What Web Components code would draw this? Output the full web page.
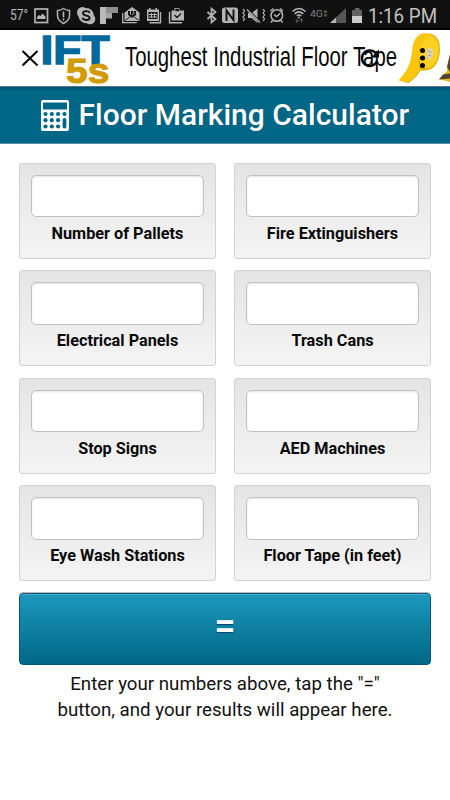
<!DOCTYPE html>
<html lang="en"><head><meta charset="utf-8"><title>Floor Marking Calculator</title>
<style>html,body{margin:0;background:#fff;width:450px;height:800px;overflow:hidden;font-family:Roboto,"Liberation Sans",sans-serif}</style></head>
<body><calculator-app></calculator-app>
<script>
const define=(name,html,init)=>customElements.define(name,class extends HTMLElement{
 constructor(){super();this.attachShadow({mode:'open'}).innerHTML=html;}
 connectedCallback(){if(init)init(this,this.shadowRoot);}
});

define('status-icon','<style>:host{display:block;height:30px;flex:none}svg{display:block;overflow:visible}</style><svg height="30"></svg>',(el,r)=>{
 const [x,w]=el.getAttribute('box').split(' ').map(Number);
 const s=r.querySelector('svg');
 s.setAttribute('width',w);s.setAttribute('viewBox',`${x} 0 ${w} 30`);
 s.innerHTML=icons[el.getAttribute('name')];
});

const C='#b4b4b4',line=`fill="none" stroke="${C}"`;
const icons={
 temp:`<text x="10" y="20" font-size="14" fill="${C}" textLength="18" lengthAdjust="spacingAndGlyphs">57°</text>`,
 image:`<rect x="35" y="9" width="12.5" height="13.5" ${line} stroke-width="1.7"/><path d="M37 19v-2l2-2 1.500 1 2-2.500 3 3v2.500z" fill="${C}"/>`,
 shield:`<path d="M63.500 8.500c2 1.500 4 2 6 2v5c0 4-3 6.500-6 8-3-1.500-6-4-6-8v-5c2 0 4-.5 6-2z" ${line} stroke-width="1.500"/><path d="M63.500 11.500v6M63.500 18.500v2" stroke="${C}" stroke-width="1.600"/>`,
 skype:`<circle cx="82.500" cy="12.500" r="5.500" fill="${C}"/><circle cx="90" cy="19" r="5.300" fill="${C}"/><circle cx="86.200" cy="15.700" r="7.600" fill="${C}"/><path d="M89.800 12.800c-1-2.200-6.800-2.300-6.800.5 0 3.200 6.600 1.500 6.600 4.600 0 2.800-5.800 2.800-7.200 0" fill="none" stroke="#111" stroke-width="1.900"/>`,
 flip:`<path d="M100 7h18v6h-6v5.500h-6V24h-6z" fill="#a5a5a5"/><path d="M100 7h6v17h-6z" fill="#b9b9b9"/><path d="M106 7h12v6h-12z" fill="#8f8f8f"/>`,
 mail:`<path d="M124.500 12.500l7.500-5.500 7.500 5.500v8.500h-15z" fill="${C}"/><path d="M128 11h8v4l-4 3-4-3z" fill="#151515"/><path d="M130.500 10.500v4M133 11.500c1.500 0 1.500 3-1 3" ${line}/><path d="M125 20.500l5.500-4h3l5.500 4" fill="none" stroke="#222"/><path d="M122.700 13v9.700h14" ${line} stroke-width="1.300"/>`,
 cal:`<path d="M147 9.500h2v-1.500h1.500v1.500h5v-1.500h1.500v1.500h2v11.500h-12z" fill="${C}"/><path d="M148.500 12h9v7h-9z" fill="#151515"/><path d="M149 14.500h8M149 17h8M151.500 13v5M154.500 13v5" stroke="${C}"/><path d="M160.500 12v10.700h-11" ${line} stroke-width="1.400"/>`,
 bag:`<path d="M171.500 10.500h3v-2.500h5v2.500h4.500v10h-12.500z" fill="${C}"/><path d="M176 9.500h2.500v1H176zM174.500 15l2.500 2.500 4-4" stroke="#181818" stroke-width="1.300" fill="none"/><path d="M169.500 12v10.700h12.500" ${line} stroke-width="1.400"/>`,
 bt:`<path d="M207.500 12l8 7-4 3.500v-14l4 3.500-8 7" ${line} stroke-width="1.700"/>`,
 nfc:`<rect x="222" y="7.500" width="16" height="15.500" rx="2.500" fill="${C}"/><path d="M226.500 21V10.500l7 9.500V9.500" fill="none" stroke="#111" stroke-width="1.900"/>`,
 mute:`<path d="M248 13h3.500l6-4.500V23l-6-5H248z" fill="${C}"/><path d="M246.500 8l14 15" stroke="#111" stroke-width="2.400"/><path d="M247 9.500l13 13" stroke="${C}" stroke-width="1.300"/><path d="M243 9l1.500 2-1.500 2 1.500 2-1.500 2 1.500 2-1.500 2M263 9l1.500 2-1.500 2 1.500 2-1.500 2 1.500 2-1.500 2" ${line} stroke-width="1.200"/>`,
 alarm:`<circle cx="276.800" cy="15.500" r="5.800" ${line} stroke-width="1.500"/><path d="M274 14.500l2.500 2 3.500-3M270.500 11l3-2.500M280 8.500l3 2.500M272.500 20.500l-1.500 2M281 20.500l1.500 2" ${line} stroke-width="1.500"/>`,
 wifi:`<path d="M292.500 11.500q6.500-6 13 0M294.700 13.800q4.300-3.800 8.600 0M296.800 16q2.300-2 4.600 0" ${line} stroke-width="1.600"/><circle cx="299" cy="17.500" r="1" fill="${C}"/><path d="M297 18.500v3.500M295.500 20.500l1.500 1.800 1.500-1.800M301.500 22.500v-3.500M300 20.500l1.500-1.800 1.500 1.800" fill="none" stroke="#666"/>`,
 lte:`<text x="310" y="16.500" font-size="8.500" fill="#808080" textLength="13" lengthAdjust="spacingAndGlyphs">4G</text><path d="M324 10.500h3v2.500h-3z" fill="#555"/><path d="M324 14h3v2.500h-3z" fill="#505050"/>`,
 signal:`<path d="M330 23L346 8v15z" fill="#555"/><path d="M330 23L336 17.500V23z" fill="${C}"/>`,
 battery:`<path d="M352 10h3V8h4.500v2h2.500v13h-10z" fill="#626262"/><path d="M352 16h10v7h-10z" fill="#cbcbcb"/>`,
 time:`<text x="368" y="22.800" font-size="19.500" fill="#c2c2c2" textLength="69" lengthAdjust="spacingAndGlyphs">1:16 PM</text>`
};
const slots=[['temp',0,32],['image',32,20],['shield',52,23],['skype',75,22],['flip',97,23],['mail',120,23],['cal',143,22],['bag',165,38],['bt',203,17],['nfc',220,20],['mute',240,27],['alarm',267,21],['wifi',288,20],['lte',308,20],['signal',328,20],['battery',348,17],['time',365,85]];
define('status-bar','<style>:host{display:flex;height:30px;background:linear-gradient(#111 27px,#000 28px)}</style>'+slots.map(s=>`<status-icon name="${s[0]}" box="${s[1]} ${s[2]}"></status-icon>`).join(''));

define('brand-banner',`<style>:host{display:block;height:56px;background:#fff}svg{display:block;overflow:visible}text{font-family:"Liberation Sans",Arial,sans-serif}</style>
<svg width="450" height="56" viewBox="0 30 450 56">
<path d="M22.500 51l15 14.500M37.500 51l-15 14.500" stroke="#000" stroke-width="2" fill="none"/>
<text x="40.500" y="63.500" font-size="41.500" font-weight="700" fill="#03689b" stroke="#03689b" stroke-width="1.500" textLength="69" lengthAdjust="spacingAndGlyphs">IFT</text>
<text x="66" y="82.500" font-size="35" font-weight="700" fill="#d29b00" stroke="#d29b00" stroke-width="1" textLength="43.500" lengthAdjust="spacingAndGlyphs">5s</text>
<text x="125" y="66" font-size="28" fill="#080808" textLength="272" lengthAdjust="spacingAndGlyphs">Toughest Industrial Floor Tape</text>
<path d="M375.800 53.200a7.800 7.800 0 1 0 1.300 7.600" fill="none" stroke="#000" stroke-width="2.400"/><path d="M379 49.500v8h-8z"/>
<path d="M420 34q8-1 14 1 6 4 6 14 0 11-6 18-6 5-14 3-5-4-5-16 0-13 5-20z" fill="#e3ae0a"/>
<ellipse cx="429" cy="52" rx="9.800" ry="16.500" fill="#fbd020" transform="rotate(8 429 52)"/>
<path d="M432 33.500l-9-.3q-8 2-10.500 13-.5 10-3 17-3 9-11 17l9 3q8-5 13-13-3-7-2-16 1-14 13.500-20.700z" fill="#f8c70d"/>
<path d="M408 83q8-5 12.500-13" fill="none" stroke="#c89907" stroke-width=".8"/>
<ellipse cx="429.500" cy="53.500" rx="3.600" ry="6" fill="#ddd3b0" transform="rotate(12 429.500 53.500)"/><path d="M427.500 51l4 1.500M428 55l3 .7" stroke="#998a60" stroke-width=".7"/>
<g><circle cx="422.500" cy="50.500" r="2.500"/><circle cx="422.500" cy="58" r="2.500"/><circle cx="422.500" cy="65.500" r="2.500"/></g>
<path d="M450 54q-3 9-3 17l-8 8 11 3z" fill="#e9b915"/><path d="M450 55l-3 12 3 5zM443 74.500l7-1v5l-11 1z" fill="#4a4535"/>
</svg>`);

define('page-title',`<style>:host{display:flex;box-sizing:border-box;height:58px;align-items:center;padding-left:41px;gap:9.500px;background:#006786;border-top:1px solid #587788;border-bottom:1px solid #5b90a5;box-shadow:inset 0 4px 3px -2px #00506e;color:#fff}
h1{margin:0;font-size:30px;font-weight:500;line-height:56px;white-space:nowrap;text-shadow:0 0 1px #004660}svg{flex:none}</style>
<svg width="28" height="31" viewBox="0 0 28 31"><rect width="28" height="31" rx="2" fill="#fff"/><path d="M2 2.500h24v7H2z" fill="#006786"/><g fill="#006786"><circle cx="4.500" cy="14" r="2.100"/><circle cx="10.800" cy="14" r="2.100"/><circle cx="17.100" cy="14" r="2.100"/><circle cx="23.500" cy="14" r="2.100"/><circle cx="4.500" cy="20.200" r="2.100"/><circle cx="10.800" cy="20.200" r="2.100"/><circle cx="17.100" cy="20.200" r="2.100"/><circle cx="4.500" cy="26.500" r="2.100"/><circle cx="10.800" cy="26.500" r="2.100"/><circle cx="17.100" cy="26.500" r="2.100"/><rect x="21.600" y="18" width="3.800" height="10.500" rx="1.900"/></g></svg>
<h1><slot></slot></h1>`);

define('number-field',`<style>:host{display:flex;flex-direction:column;align-items:center;box-sizing:border-box;height:96px;padding:11px 11.500px 0;border:1px solid #d2d2d2;border-radius:3px;background:linear-gradient(#e4e4e4,#f4f4f4)}
input{box-sizing:border-box;width:173px;height:42.500px;border:1px solid #c1c1c1;border-radius:5px;background:#fff;box-shadow:inset 0 1px 2px #e4e4e4;outline:0}
label{font-size:16.250px;line-height:20px;margin-top:6.600px;font-weight:700;color:#090909;white-space:nowrap}</style><input><label><slot></slot></label>`);

define('equals-button',`<style>:host{display:block}button{display:flex;align-items:center;justify-content:center;box-sizing:border-box;width:100%;height:72px;border:1px solid #07577a;border-radius:4px;background:linear-gradient(#1c98bd,#006786);box-shadow:inset 0 1px #4cadca,0 -1px #b8b8b8;color:#fff;font:500 38px Roboto,sans-serif;padding:0 0 5px;text-shadow:0 1px 1px #00465f}</style><button><slot></slot></button>`);

define('result-note',`<style>:host{display:block;text-align:center;color:#111;font-size:18.700px;line-height:26px;white-space:nowrap}</style><slot></slot>`);

const labels=['Number of Pallets','Fire Extinguishers','Electrical Panels','Trash Cans','Stop Signs','AED Machines','Eye Wash Stations','Floor Tape (in feet)'];
define('calculator-app',`<style>:host{display:block;height:800px}main{padding:18.600px 19px 0}.fields{display:grid;grid-template-columns:197px 197px;column-gap:18px;row-gap:11.500px}equals-button{margin-top:11.900px}result-note{margin-top:6px}</style>
<status-bar></status-bar><brand-banner></brand-banner><page-title>Floor Marking Calculator</page-title>
<main><div class="fields">${labels.map(l=>`<number-field>${l}</number-field>`).join('')}</div><equals-button>=</equals-button><result-note>Enter your numbers above, tap the "="<br>button, and your results will appear here.</result-note></main>`);
</script></body></html>
